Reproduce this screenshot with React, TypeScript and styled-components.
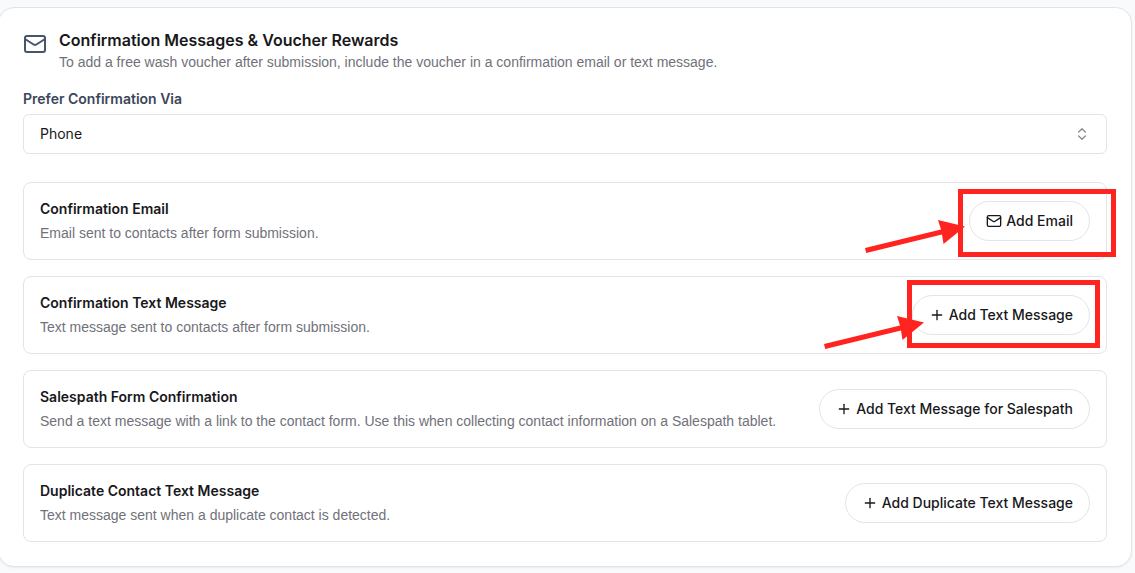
import React from "react";
import styled, { createGlobalStyle } from "styled-components";
import { ChevronsUpDown, Mail, Plus } from "lucide-react";

const GlobalStyle = createGlobalStyle`
  *, *::before, *::after { box-sizing: border-box; }
  html, body { margin: 0; }
  body {
    background: #f8fafc;
    color: #18181b;
    font-family: Inter, "Liberation Sans", Arial, sans-serif;
    font-size: 14px;
    line-height: 20px;
    overflow-x: hidden;
  }
`;

const Page = styled.main`
  padding: 7px 3px 6px 0;
`;

const Panel = styled.section`
  margin-left: -2px;
  padding: 24px;
  border: 1px solid #e1e3e6;
  border-radius: 16px;
  background: #fff;
  box-shadow: 0 1px 2px rgba(0, 0, 0, 0.06);
`;

const Header = styled.header`
  display: flex;
  gap: 12px;
  color: #475569;
`;

const HeaderText = styled.div`
  display: grid;
  gap: 4px;
`;

const Title = styled.h2`
  margin: 0;
  font-size: 16px;
  font-weight: 600;
  line-height: 16px;
  color: #18181b;
`;

const Description = styled.p`
  margin: 0;
  font-family: "Liberation Sans", Arial, sans-serif;
  color: #71717a;
`;

const Field = styled.div`
  display: grid;
  gap: 5px;
  margin: 17px 0 28px;
`;

const Label = styled.label`
  font-weight: 600;
  color: #3b4659;
`;

const SelectWrap = styled.div`
  display: grid;
  align-items: center;
  color: #8b8b8f;

  > * {
    grid-area: 1 / 1;
  }

  svg {
    justify-self: end;
    margin-right: 17px;
    pointer-events: none;
  }
`;

const Select = styled.select`
  appearance: none;
  width: 100%;
  height: 40px;
  padding: 0 16px;
  border: 1px solid #e4e4e7;
  border-radius: 6px;
  background: #fff;
  color: #18181b;
  font: inherit;
`;

const List = styled.div`
  display: grid;
  gap: 16px;
`;

const Row = styled.article`
  display: flex;
  align-items: center;
  justify-content: space-between;
  gap: 16px;
  padding: 16px;
  border: 1px solid #e4e4e7;
  border-radius: 8px;
`;

const RowText = styled.div`
  display: grid;
  gap: 4px;
`;

const RowTitle = styled.h3`
  margin: 0;
  font-size: 14px;
  font-weight: 600;
  line-height: 20px;
`;

const Action = styled.div`
  position: relative;
  flex-shrink: 0;
`;

const Button = styled.button`
  display: flex;
  align-items: center;
  gap: 4px;
  height: 40px;
  padding: 0 16px;
  border: 1px solid #e4e4e7;
  border-radius: 20px;
  background: #fff;
  color: #18181b;
  font: inherit;
  font-weight: 500;
  white-space: nowrap;
`;

const Highlight = styled.div<{ $top: number; $right: number; $width: number }>`
  position: absolute;
  top: ${(p) => p.$top}px;
  right: ${(p) => p.$right}px;
  width: ${(p) => p.$width}px;
  height: 68px;
  border: 5px solid #ff2420;
  pointer-events: none;
`;

const Arrow = styled.svg<{ $top: number; $right: number }>`
  position: absolute;
  top: ${(p) => p.$top}px;
  right: ${(p) => p.$right}px;
  fill: #ff2420;
  pointer-events: none;
`;

type Callout = {
  box: { top: number; right: number; width: number };
  arrow: { top: number; right: number };
};

type Message = {
  title: string;
  text: string;
  action: string;
  icon: "mail" | "plus";
  callout?: Callout;
};

const messages: Message[] = [
  {
    title: "Confirmation Email",
    text: "Email sent to contacts after form submission.",
    action: "Add Email",
    icon: "mail",
    callout: {
      box: { top: -12, right: -26, width: 158 },
      arrow: { top: 18, right: 124 },
    },
  },
  {
    title: "Confirmation Text Message",
    text: "Text message sent to contacts after form submission.",
    action: "Add Text Message",
    icon: "plus",
    callout: {
      box: { top: -15, right: -10, width: 193 },
      arrow: { top: 20, right: 165 },
    },
  },
  {
    title: "Salespath Form Confirmation",
    text: "Send a text message with a link to the contact form. Use this when collecting contact information on a Salespath tablet.",
    action: "Add Text Message for Salespath",
    icon: "plus",
  },
  {
    title: "Duplicate Contact Text Message",
    text: "Text message sent when a duplicate contact is detected.",
    action: "Add Duplicate Text Message",
    icon: "plus",
  },
];

export default function App() {
  return (
    <>
      <GlobalStyle />
      <Page>
        <Panel>
          <Header>
            <Mail size={24} aria-hidden />
            <HeaderText>
              <Title>Confirmation Messages &amp; Voucher Rewards</Title>
              <Description>
                To add a free wash voucher after submission, include the voucher in a confirmation email or text message.
              </Description>
            </HeaderText>
          </Header>
          <Field>
            <Label htmlFor="prefer-via">Prefer Confirmation Via</Label>
            <SelectWrap>
              <Select id="prefer-via" defaultValue="Phone">
                <option>Phone</option>
                <option>Email</option>
              </Select>
              <ChevronsUpDown size={16} aria-hidden />
            </SelectWrap>
          </Field>
          <List>
            {messages.map((m) => (
              <Row key={m.title}>
                <RowText>
                  <RowTitle>{m.title}</RowTitle>
                  <Description>{m.text}</Description>
                </RowText>
                <Action>
                  <Button type="button">
                    {m.icon === "mail" ? <Mail size={16} aria-hidden /> : <Plus size={16} aria-hidden />}
                    {m.action}
                  </Button>
                  {m.callout && (
                    <>
                      <Highlight
                        $top={m.callout.box.top}
                        $right={m.callout.box.right}
                        $width={m.callout.box.width}
                      />
                      <Arrow
                        $top={m.callout.arrow.top}
                        $right={m.callout.arrow.right}
                        width="102"
                        height="36"
                        viewBox="0 0 102 36"
                        aria-hidden
                      >
                        <path d="M1 29 77 10.5 74 1 101 7.5 79.5 25 78 15.5 2.2 34Z" />
                      </Arrow>
                    </>
                  )}
                </Action>
              </Row>
            ))}
          </List>
        </Panel>
      </Page>
    </>
  );
}
